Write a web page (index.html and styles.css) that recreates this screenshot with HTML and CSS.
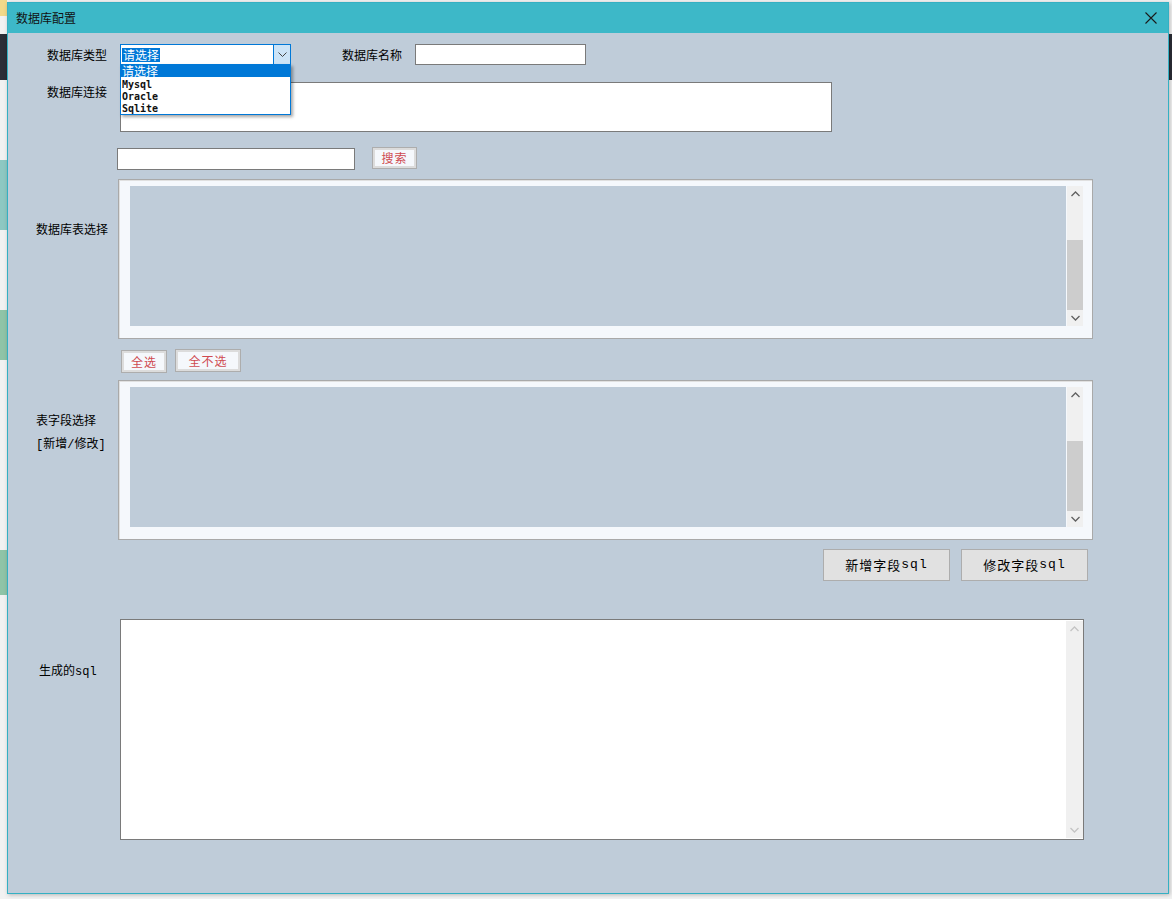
FILE: index.html
```html
<!DOCTYPE html>
<html lang="zh">
<head>
<meta charset="utf-8">
<title>数据库配置</title>
<link rel="stylesheet" href="styles.css">
</head>
<body>
<div class="backdrop">
  <div class="bg-frag frag-a"></div>
  <div class="bg-frag frag-b"></div>
  <div class="bg-frag frag-c"></div>
  <div class="bg-frag frag-d"></div>
  <div class="bg-frag frag-e"></div>
  <div class="bg-frag frag-f"></div>
</div>
<div class="window">
  <div class="titlebar">
    <span class="title">数据库配置</span>
    <svg class="close" width="12" height="12" viewBox="0 0 12 12"><path d="M0.5 0.5 L11.5 11.5 M11.5 0.5 L0.5 11.5" stroke="#1a1a1a" stroke-width="1.1" fill="none"/></svg>
  </div>
  <div class="content">
    <div class="row row1">
      <span class="lbl lbl-type">数据库类型</span>
      <div class="select">
        <span class="sel-text">请选择</span>
        <span class="sel-btn"><svg width="9" height="6" viewBox="0 0 9 6"><path d="M0.5 0.5 L4.5 4.5 L8.5 0.5" stroke="#444" stroke-width="1" fill="none"/></svg></span>
        <ul class="dropdown">
          <li class="opt opt-sel">请选择</li>
          <li class="opt">Mysql</li>
          <li class="opt">Oracle</li>
          <li class="opt">Sqlite</li>
        </ul>
      </div>
      <span class="lbl lbl-name">数据库名称</span>
      <div class="input input-name"></div>
    </div>
    <div class="row row2">
      <span class="lbl lbl-conn">数据库连接</span>
      <div class="input input-conn"></div>
    </div>
    <div class="row row3">
      <div class="input input-search"></div>
      <div class="btn-red btn-search">搜索</div>
    </div>
    <div class="row row4">
      <span class="lbl lbl-table">数据库表选择</span>
      <div class="listbox">
        <div class="list-inner"></div>
        <div class="vscroll">
          <svg class="arr" width="9" height="6" viewBox="0 0 9 6"><path d="M0.5 5 L4.5 1 L8.5 5" stroke="#606060" stroke-width="1.3" fill="none"/></svg>
          <div class="track"><div class="thumb"></div></div>
          <svg class="arr" width="9" height="6" viewBox="0 0 9 6"><path d="M0.5 1 L4.5 5 L8.5 1" stroke="#606060" stroke-width="1.3" fill="none"/></svg>
        </div>
      </div>
    </div>
    <div class="row row5">
      <div class="btn-red btn-all">全选</div>
      <div class="btn-red btn-none">全不选</div>
    </div>
    <div class="row row6">
      <div class="lbl lbl-field"><div>表字段选择</div><div class="mono">[新增/修改]</div></div>
      <div class="listbox">
        <div class="list-inner"></div>
        <div class="vscroll">
          <svg class="arr" width="9" height="6" viewBox="0 0 9 6"><path d="M0.5 5 L4.5 1 L8.5 5" stroke="#606060" stroke-width="1.3" fill="none"/></svg>
          <div class="track"><div class="thumb"></div></div>
          <svg class="arr" width="9" height="6" viewBox="0 0 9 6"><path d="M0.5 1 L4.5 5 L8.5 1" stroke="#606060" stroke-width="1.3" fill="none"/></svg>
        </div>
      </div>
    </div>
    <div class="row row7">
      <div class="btn-gray">新增字段<span class="mono">sql</span></div>
      <div class="btn-gray">修改字段<span class="mono">sql</span></div>
    </div>
    <div class="row row8">
      <span class="lbl lbl-sql">生成的<span class="mono">sql</span></span>
      <div class="textarea">
        <div class="ta-scroll">
          <svg class="arr" width="9" height="6" viewBox="0 0 9 6"><path d="M0.5 5 L4.5 1 L8.5 5" stroke="#c4c4c4" stroke-width="1.3" fill="none"/></svg>
          <svg class="arr" width="9" height="6" viewBox="0 0 9 6"><path d="M0.5 1 L4.5 5 L8.5 1" stroke="#c4c4c4" stroke-width="1.3" fill="none"/></svg>
        </div>
      </div>
    </div>
  </div>
</div>
</body>
</html>
```

FILE: styles.css
```css
* { box-sizing: border-box; }
html, body { margin: 0; padding: 0; }
body {
  width: 1172px;
  height: 899px;
  overflow: hidden;
  background: #f2f2f2;
  font-family: "Noto Sans CJK SC", sans-serif;
  font-size: 12px;
  color: #000;
  position: relative;
}
.backdrop { position: absolute; inset: 0; }
.bg-frag { position: absolute; }
.frag-a { left: 0; top: 0; width: 7px; height: 16px; background: #f1d98a; }
.frag-b { left: 0; top: 34px; width: 7px; height: 46px; background: #2b2d36; }
.frag-c { left: 0; top: 160px; width: 7px; height: 70px; background: #3aa59a; opacity: .55; }
.frag-d { left: 0; top: 310px; width: 7px; height: 50px; background: #3e9e6a; opacity: .55; }
.frag-e { left: 0; top: 550px; width: 7px; height: 45px; background: #3e9e6a; opacity: .55; }
.frag-f { right: 0; top: 34px; width: 4px; height: 46px; background: #2b2d36; }

.window {
  position: absolute;
  left: 7px;
  top: 2px;
  width: 1162px;
  height: 892px;
  border: 1px solid #34b0c3;
  background: #bfccd9;
  box-shadow: 1px 1px 4px rgba(0,0,0,.25);
  display: flex;
  flex-direction: column;
}
.titlebar {
  height: 30px;
  background: #3db8c8;
  display: flex;
  align-items: center;
  justify-content: space-between;
  padding: 0 11px 0 8px;
  flex: none;
}
.title { font-size: 12px; line-height: 14px; color: #111; }
.close { display: block; }

.content { display: flex; flex-direction: column; }
.row { display: flex; align-items: flex-start; }
.lbl { line-height: 14px; white-space: nowrap; }
.mono { font-family: "Liberation Mono", "Noto Sans CJK SC", monospace; }

/* row 1 */
.row1 { margin-top: 11px; height: 21px; align-items: center; }
.lbl-type { margin-left: 39px; width: 73px; }
.select {
  position: relative;
  width: 171px;
  height: 21px;
  border: 1px solid #0078d7;
  background: #fff;
  display: flex;
  align-items: center;
  justify-content: space-between;
}
.sel-text {
  margin-left: 1px;
  background: #0078d7;
  color: #fff;
  line-height: 14px;
  padding: 0 1px;
}
.sel-btn {
  width: 17px;
  height: 19px;
  background: #cce4f7;
  border-left: 1px solid #0078d7;
  display: flex;
  align-items: center;
  justify-content: center;
}
.dropdown {
  position: absolute;
  left: -1px;
  top: 19px;
  width: 171px;
  height: 51px;
  margin: 0;
  padding: 0;
  list-style: none;
  background: #fff;
  border: 1px solid #0078d7;
  box-shadow: 2px 2px 3px rgba(0,0,0,.35);
  z-index: 5;
}
.opt {
  height: 12px;
  line-height: 13px;
  padding-left: 1px;
  font-family: "DejaVu Sans Mono", monospace;
  font-size: 10px;
  font-weight: bold;
  color: #111;
  padding-top: 1px;
}
.opt-sel {
  background: #0078d7;
  color: #fff;
  font-family: "Noto Sans CJK SC", sans-serif;
  font-size: 12px;
  font-weight: normal;
  line-height: 12px;
  padding-top: 0;
}
.lbl-name { margin-left: 51px; width: 73px; }
.input { background: #fff; border: 1px solid #7a7a7a; }
.input-name { width: 171px; height: 21px; }

/* row 2 */
.row2 { margin-top: 17px; }
.lbl-conn { margin-left: 39px; width: 73px; margin-top: 3px; }
.input-conn { width: 712px; height: 50px; }

/* row 3 */
.row3 { margin-top: 16px; }
.input-search { margin-left: 109px; width: 238px; height: 22px; }
.btn-red {
  background: #f5f8fc;
  border: 1px solid #adadad;
  box-shadow: inset 0 0 0 2px #dcdcdc;
  color: #cf4a50;
  display: flex;
  align-items: center;
  justify-content: center;
  line-height: 14px;
  letter-spacing: 1px;
}
.btn-search { margin-left: 17px; margin-top: -1px; width: 45px; height: 22px; }

/* list boxes */
.row4, .row6 { height: 160px; align-items: center; }
.row4 { margin-top: 9px; }
.row6 { margin-top: 8px; }
.lbl-table { margin-left: 28px; width: 82px; margin-top: -60px; }
.lbl-field { margin-left: 28px; width: 82px; margin-top: -56px; line-height: 24px; }
.lbl-field .mono { margin-top: 1px; }
.listbox {
  width: 975px;
  height: 160px;
  border: 1px solid #a9a9a9;
  background: #f5f8fc;
  box-shadow: inset 1px 1px 0 #e0e0e0;
  padding: 6px 9px 12px 11px;
  display: flex;
}
.list-inner { flex: 1; background: #bfccd9; margin-right: 1px; }
.vscroll {
  width: 16px;
  background: #f0f0f0;
  display: flex;
  flex-direction: column;
  align-items: center;
}
.arr { display: block; flex: none; margin: 5px 0; }
.track { flex: 1; width: 100%; position: relative; }
.thumb {
  position: absolute;
  left: 0;
  right: 0;
  top: 38px;
  height: 70px;
  background: #cdcdcd;
}

/* row 5 */
.row5 { margin-top: 10px; height: 23px; align-items: flex-start; }
.btn-all { margin-left: 113px; margin-top: 1px; width: 46px; height: 23px; }
.btn-none { margin-left: 8px; width: 66px; height: 23px; }

/* row 7 */
.row7 { margin-top: 9px; justify-content: flex-end; padding-right: 80px; gap: 11px; }
.btn-gray {
  width: 127px;
  height: 32px;
  background: #e1e1e1;
  border: 1px solid #adadad;
  display: flex;
  align-items: center;
  justify-content: center;
  font-size: 13px;
  line-height: 16px;
  letter-spacing: 1px;
}

/* row 8 */
.row8 { margin-top: 38px; height: 221px; }
.lbl-sql { margin-left: 31px; width: 81px; margin-top: 44px; }
.textarea {
  width: 964px;
  height: 221px;
  background: #fff;
  border: 1px solid #7a7a7a;
  display: flex;
  justify-content: flex-end;
}
.ta-scroll {
  width: 17px;
  background: #f0f0f0;
  display: flex;
  flex-direction: column;
  justify-content: space-between;
  align-items: center;
  margin: 1px 0;
}
```
